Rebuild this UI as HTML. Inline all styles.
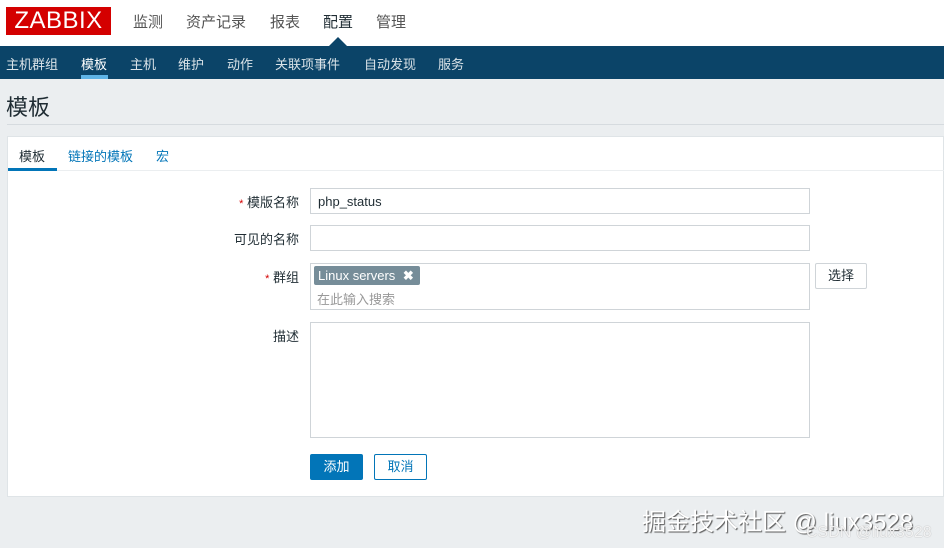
<!DOCTYPE html>
<html><head><meta charset="utf-8"><style>
*{box-sizing:border-box;margin:0;padding:0}
body{width:944px;height:548px;background:#ebeef0;font-family:"Liberation Sans","Noto Sans CJK SC",sans-serif;font-size:13px;color:#1f2c33;position:relative;overflow:hidden}
.top{position:absolute;left:0;top:0;width:944px;height:46px;background:#fff}
.logo{position:absolute;left:6px;top:7px;width:105px;height:28px;background:#d40000;color:#fff;font-size:24px;line-height:28px;text-align:center;letter-spacing:0.5px}
.tm{position:absolute;top:11px;font-size:15px;color:#555}
.nav{position:absolute;left:0;top:46px;width:944px;height:33px;background:#0b4468}
.ni{position:absolute;top:8px;color:#fff;font-size:13px;opacity:.85}
.tri{position:absolute;left:329px;top:37px;width:0;height:0;border-left:9px solid transparent;border-right:9px solid transparent;border-bottom:9px solid #0b4468}
h1{position:absolute;left:6px;top:90px;font-size:22px;font-weight:normal;color:#1f2c33}
.sep{position:absolute;left:7px;top:124px;width:937px;height:1px;background:#d6dbdf}
.panel{position:absolute;left:7px;top:136px;width:937px;height:361px;background:#fff;border:1px solid #dfe4e7}
.tabs{position:absolute;left:0;top:0;width:937px;height:34px;border-bottom:1px solid #ebeef0}
.tab{position:absolute;top:9px;font-size:13px;color:#0275b8}
.lbl{position:absolute;font-size:13px;color:#1f2c33;text-align:right;width:120px}
.lbl b{color:#d40000;font-weight:normal;font-size:11px}
.in{position:absolute;left:310px;width:500px;border:1px solid #cfd4d8;background:#fff}
.btn{position:absolute;border-radius:2px;font-size:13px;text-align:center}
</style></head><body>
<div class="top">
<div class="logo">ZABBIX</div>
<span class="tm" style="left:133px">监测</span>
<span class="tm" style="left:186px">资产记录</span>
<span class="tm" style="left:270px">报表</span>
<span class="tm" style="left:323px;color:#1f2c33">配置</span>
<span class="tm" style="left:376px">管理</span>
<div class="tri"></div>
</div>
<div class="nav">
<span class="ni" style="left:6px">主机群组</span>
<span class="ni" style="left:81px;opacity:1">模板</span>
<div style="position:absolute;left:81px;top:29px;width:27px;height:4px;background:#5fb4e6"></div>
<span class="ni" style="left:130px">主机</span>
<span class="ni" style="left:178px">维护</span>
<span class="ni" style="left:227px">动作</span>
<span class="ni" style="left:275px">关联项事件</span>
<span class="ni" style="left:364px">自动发现</span>
<span class="ni" style="left:438px">服务</span>
</div>
<h1>模板</h1>
<div class="sep"></div>
<div class="panel">
<div class="tabs">
<span class="tab" style="left:11px;color:#1f2c33">模板</span>
<div style="position:absolute;left:0;top:31px;width:49px;height:3px;background:#0275b8"></div>
<span class="tab" style="left:60px">链接的模板</span>
<span class="tab" style="left:148px">宏</span>
</div>
</div>
<div class="lbl" style="left:179px;top:192px"><b>*</b> 模版名称</div>
<div class="in" style="top:188px;height:26px;padding:5px 7px">php_status</div>
<div class="lbl" style="left:179px;top:229px">可见的名称</div>
<div class="in" style="top:225px;height:26px"></div>
<div class="lbl" style="left:179px;top:267px"><b>*</b> 群组</div>
<div class="in" style="top:263px;height:47px">
<div style="position:absolute;left:3px;top:2px;height:19px;width:106px;background:#768d99;color:#fff;padding:2px 4px;border-radius:2px">Linux servers <b style="margin-left:4px">✖</b></div>
<div style="position:absolute;left:6px;top:25px;color:#999">在此输入搜索</div>
</div>
<div class="btn" style="left:815px;top:263px;width:52px;height:26px;border:1px solid #cfd4d8;line-height:24px">选择</div>
<div class="lbl" style="left:179px;top:326px">描述</div>
<div class="in" style="top:322px;height:116px"></div>
<div class="btn" style="left:310px;top:454px;width:53px;height:26px;background:#0275b8;color:#fff;line-height:26px">添加</div>
<div class="btn" style="left:374px;top:454px;width:53px;height:26px;border:1px solid #0275b8;color:#0275b8;line-height:24px">取消</div>
<div style="position:absolute;left:642px;top:502px;font-size:24px;color:#fff;text-shadow:1px 1px 1px #555;white-space:nowrap">掘金技术社区 @ liux3528</div>
<div style="position:absolute;left:806px;top:524px;font-size:16px;color:rgba(255,255,255,.85);text-shadow:0 0 1px #999;white-space:nowrap">CSDN @liux3528</div>
</body></html>
